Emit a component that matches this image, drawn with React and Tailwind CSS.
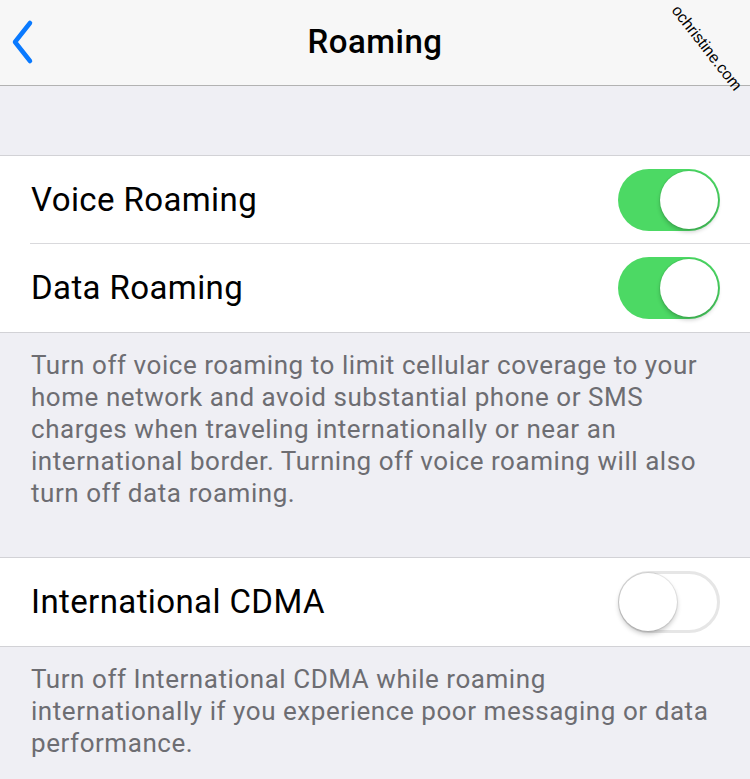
import React from "react";

const font = { fontFamily: "Roboto, 'Noto Sans', sans-serif" };

function Toggle({ on }) {
  return on ? (
    <div className="w-[102px] h-[62px] rounded-full bg-[#4cd964] flex items-center justify-end p-[2px]">
      <div className="w-[58px] h-[58px] rounded-full bg-white shadow-[0_3px_4px_rgba(0,0,0,0.2),0_0_0_1px_rgba(0,0,0,0.06)]" />
    </div>
  ) : (
    <div className="w-[102px] h-[62px] rounded-full bg-white border-[3px] border-[#e6e6e6] flex items-center justify-start">
      <div className="w-[58px] h-[58px] ml-[-2px] rounded-full bg-white shadow-[0_3px_5px_rgba(0,0,0,0.22),0_0_0_1px_rgba(0,0,0,0.08)]" />
    </div>
  );
}

function Row({ label, on, sep }) {
  return (
    <div className="pl-[30px] bg-white">
      <div className={`h-[88px] flex items-center justify-between pl-[1px] pr-[30px] ${sep ? "border-b border-[#d9d9dc]" : ""}`}>
        <span className="text-[33px] text-black tracking-[0.4px]">{label}</span>
        <Toggle on={on} />
      </div>
    </div>
  );
}

export default function App() {
  return (
    <div className="relative w-[750px] h-[779px] bg-[#efeff4] overflow-hidden" style={font}>
      <div className="h-[86px] bg-[#f7f7f7] border-b border-[#b2b2b2] flex items-center px-[10px] relative">
        <svg width="30" height="46" viewBox="0 0 30 46" className="mt-[-2px]">
          <path d="M20 4 L5 23 L20 42" fill="none" stroke="#0a7aff" strokeWidth="4.5" strokeLinecap="round" strokeLinejoin="round" />
        </svg>
        <span className="flex-1 text-center text-[33px] font-medium text-black tracking-[0.5px] mt-[-2px] mr-[30px]">Roaming</span>
      </div>
      <div className="absolute left-[655px] top-[36px] rotate-[52deg] text-[16px] text-black origin-center" style={{ fontFamily: "'Liberation Sans', sans-serif" }}>
        ochristine.com
      </div>
      <div className="h-[69px]" />
      <div className="border-t border-b border-[#d2d2d6]">
        <Row label="Voice Roaming" on sep />
        <Row label="Data Roaming" on />
      </div>
      <div className="h-[224px] pt-[16px] pl-[31px] pr-[30px] text-[26px] leading-[32px] tracking-[0.55px] text-[#6d6d72]">
        Turn off voice roaming to limit cellular coverage to your home network and avoid substantial phone or SMS charges when traveling internationally or near an international border. Turning off voice roaming will also turn off data roaming.
      </div>
      <div className="border-t border-b border-[#d2d2d6]">
        <Row label="International CDMA" on={false} />
      </div>
      <div className="pt-[16px] pl-[31px] pr-[30px] text-[26px] leading-[32px] tracking-[0.55px] text-[#6d6d72]">
        Turn off International CDMA while roaming internationally if you experience poor messaging or data performance.
      </div>
    </div>
  );
}
